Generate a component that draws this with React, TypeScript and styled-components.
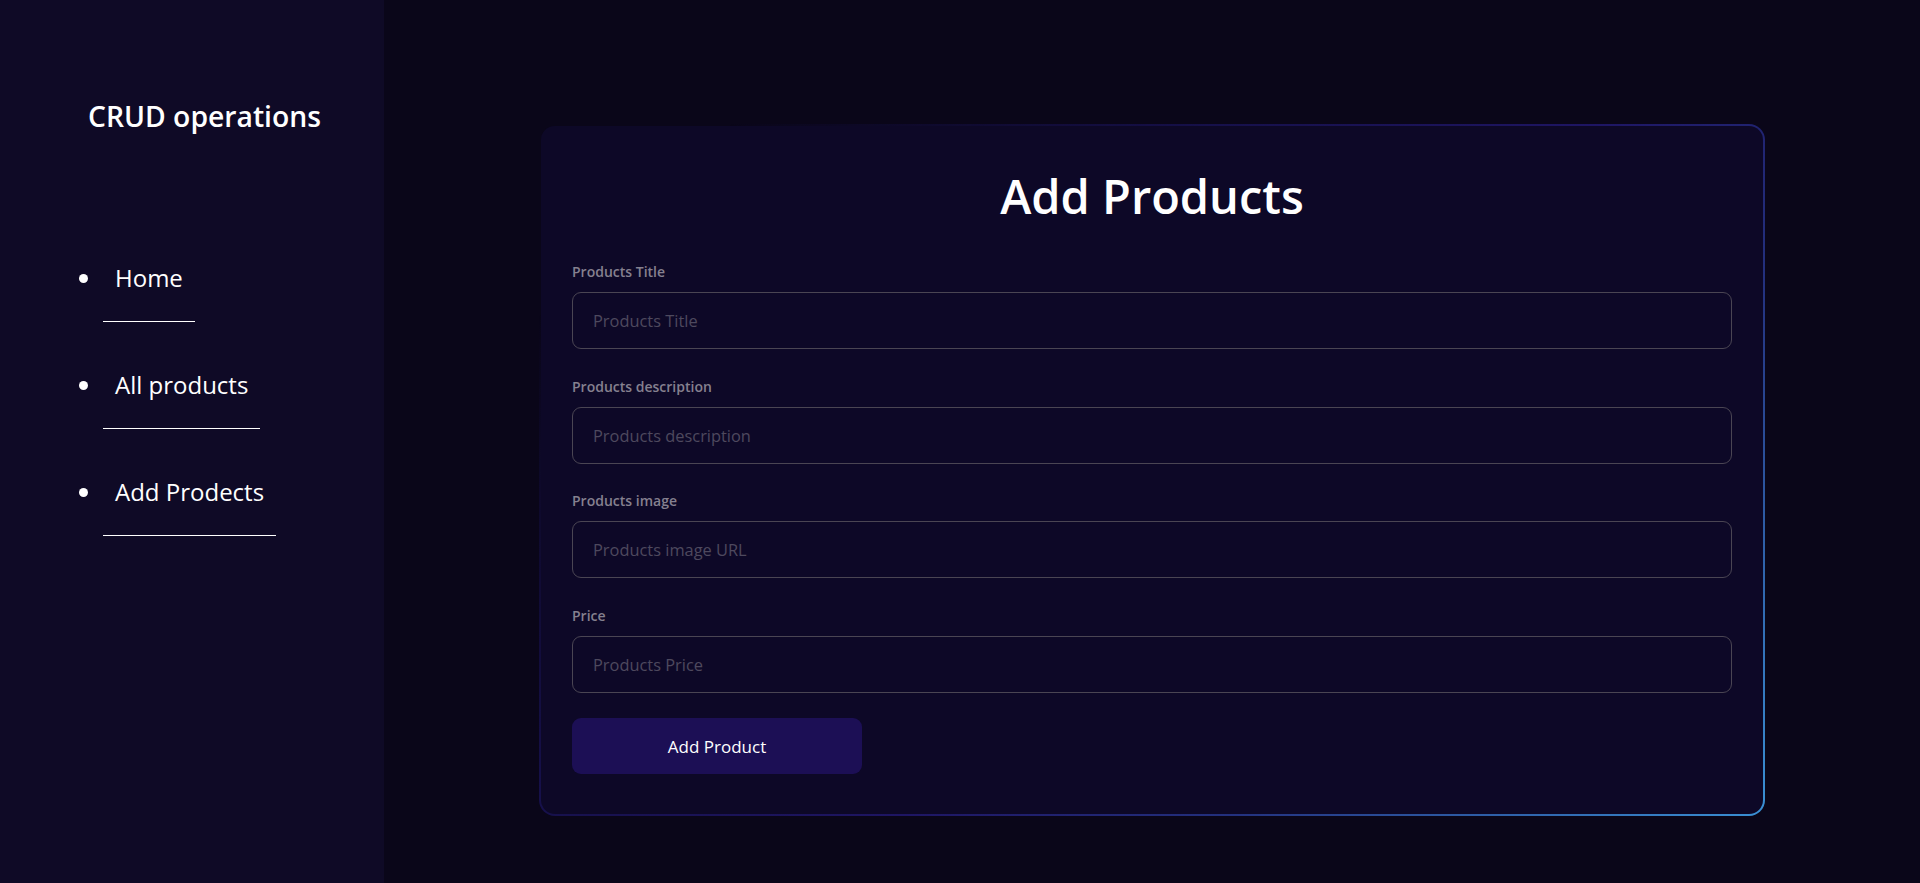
import React from "react";
import styled, { createGlobalStyle } from "styled-components";

const GlobalStyle = createGlobalStyle`
  html, body {
    margin: 0;
    padding: 0;
    background: #0a0619;
  }
  body {
    font-family: "Open Sans", "Noto Sans", sans-serif;
    color: #ffffff;
  }
  * {
    box-sizing: border-box;
  }
`;

const links = ["Home", "All products", "Add Prodects"];

const fields = [
  { label: "Products Title", placeholder: "Products Title" },
  { label: "Products description", placeholder: "Products description" },
  { label: "Products image", placeholder: "Products image URL" },
  { label: "Price", placeholder: "Products Price" },
];

export default function App() {
  return (
    <>
      <GlobalStyle />
      <Layout>
        <Sidebar>
          <Brand>CRUD operations</Brand>
          <NavList>
            {links.map((link) => (
              <NavItem key={link}>
                <NavLink href="#">{link}</NavLink>
              </NavItem>
            ))}
          </NavList>
        </Sidebar>
        <Main>
          <Card>
            <Title>Add Products</Title>
            <Form onSubmit={(e) => e.preventDefault()}>
              {fields.map((field) => (
                <Field key={field.label}>
                  <Label>{field.label}</Label>
                  <Input type="text" placeholder={field.placeholder} />
                </Field>
              ))}
              <SubmitButton type="submit">Add Product</SubmitButton>
            </Form>
          </Card>
          {/* product thumbnails start just below the fold */}
          <Gallery>
            <Glow $width={228} />
            <Glow $width={392} />
          </Gallery>
        </Main>
      </Layout>
    </>
  );
}

const Layout = styled.div`
  display: flex;
  height: 100vh;
  overflow: hidden;
`;

const Sidebar = styled.aside`
  width: 384px;
  flex-shrink: 0;
  background: #0f0a26;
  padding-top: 97px;
`;

const Brand = styled.h2`
  margin: 0;
  padding-left: 88px;
  font-size: 28.3px;
  font-weight: 600;
  line-height: normal;
`;

const NavList = styled.ul`
  margin: 126px 0 0;
  padding-left: 103px;
  list-style: disc;
`;

const NavItem = styled.li`
  font-size: 24px;
  line-height: normal;
  margin-bottom: 46px;
`;

const NavLink = styled.a`
  display: inline-block;
  padding: 0 12px 27px;
  color: #ffffff;
  text-decoration: none;
  border-bottom: 1px solid #ffffff;
`;

const Main = styled.main`
  flex: 1;
  display: flex;
  flex-direction: column;
  align-items: center;
  padding-top: 124px;
  background: #0a0619;
`;

const Card = styled.section`
  width: 1226px;
  padding: 38px 31px 40px;
  border: 2px solid transparent;
  border-radius: 16px;
  background:
    linear-gradient(#0d0827, #0d0827) padding-box,
    linear-gradient(
        135deg,
        rgba(20, 14, 60, 0) 10%,
        #16104a 35%,
        #1e1563 55%,
        #23307e 72%,
        #3a90d4 100%
      )
      border-box;
`;

const Title = styled.h1`
  margin: 0 0 34px;
  text-align: center;
  font-size: 47px;
  font-weight: 600;
  line-height: normal;
`;

const Form = styled.form`
  display: flex;
  flex-direction: column;
`;

const Field = styled.div`
  display: flex;
  flex-direction: column;
  margin-bottom: 27.7px;

  &:last-of-type {
    margin-bottom: 25px;
  }
`;

const Label = styled.label`
  font-size: 14px;
  font-weight: 600;
  line-height: 19px;
  color: #85808f;
  margin-bottom: 11px;
`;

const Input = styled.input`
  height: 57px;
  padding: 0 20px;
  border: 1px solid #4a4553;
  border-radius: 9px;
  background: transparent;
  color: #ffffff;
  font-family: inherit;
  font-size: 16.4px;
  outline: none;

  &::placeholder {
    color: #4e495e;
  }
`;

const SubmitButton = styled.button`
  width: 290px;
  height: 56px;
  border: none;
  border-radius: 9px;
  background: #1c0f55;
  color: #ffffff;
  font-family: inherit;
  font-size: 17px;
  cursor: pointer;
`;

const Gallery = styled.div`
  align-self: stretch;
  display: flex;
  gap: 263px;
  padding-left: 32px;
  margin-top: 67px;
`;

const Glow = styled.div<{ $width: number }>`
  width: ${(p) => p.$width}px;
  height: 120px;
  flex-shrink: 0;
  border-radius: 8px;
  background: linear-gradient(90deg, #3a1648, #8d2a6c 50%, #4a1a52);
`;
